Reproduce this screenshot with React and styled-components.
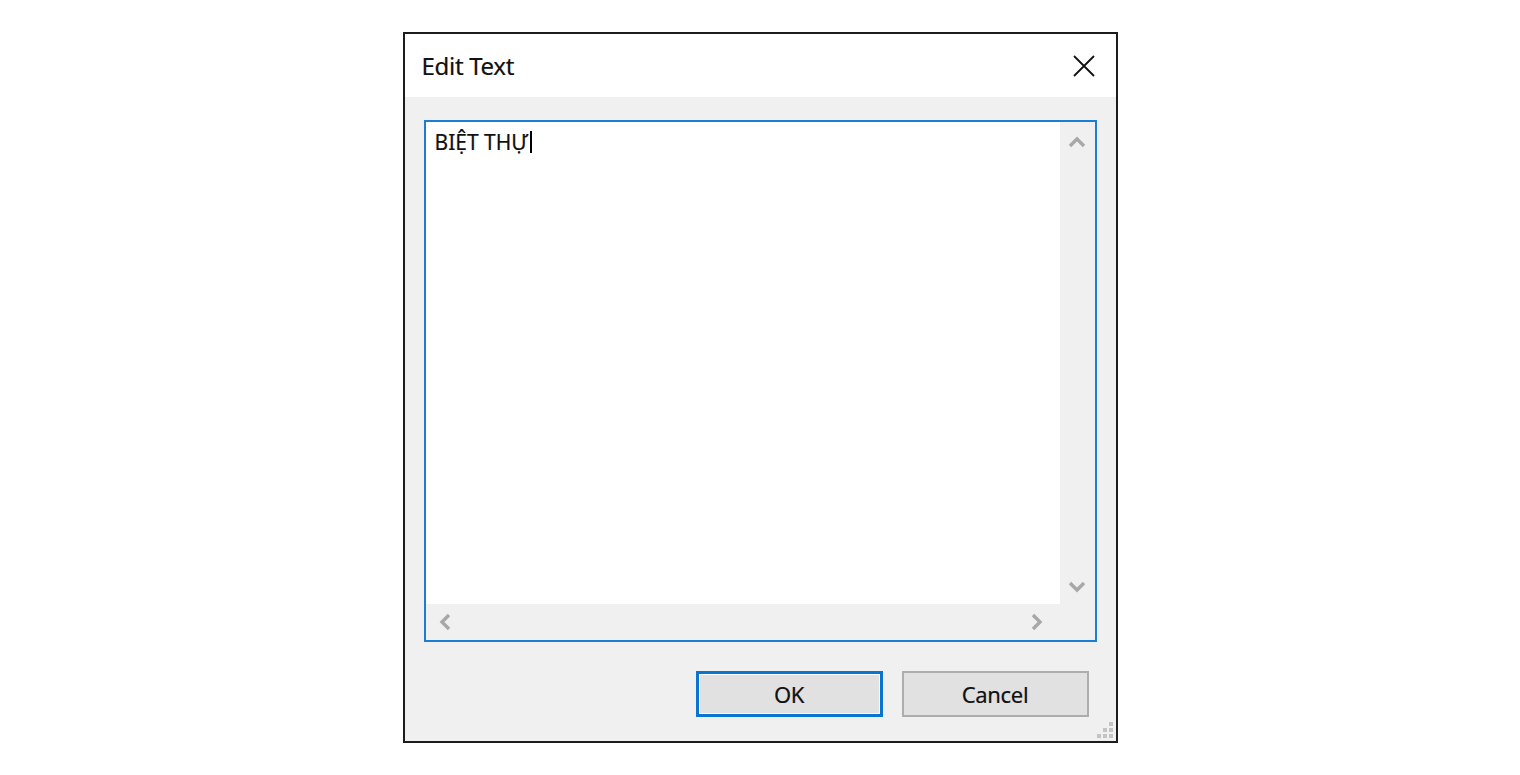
import styled, {createGlobalStyle} from "styled-components";

const GlobalStyle = createGlobalStyle`
    html, body {
        margin: 0;
        padding: 0;
        background: #ffffff;
    }
    body {
        font-family: "Noto Sans", "Open Sans", "Liberation Sans", sans-serif;
    }
`

const Page = styled.div`
    display: flex;
    justify-content: center;
    align-items: flex-start;
    padding-top: 32px;
    width: 1520px;
    height: 775px;
    box-sizing: border-box;
`

const Dialog = styled.div`
    position: relative;
    width: 715px;
    box-sizing: border-box;
    border: 2px solid #1c1c1c;
    background: #f0f0f0;
    display: flex;
    flex-direction: column;
`

const TitleBar = styled.div`
    height: 63px;
    background: #ffffff;
    display: flex;
    align-items: center;
    justify-content: space-between;
    padding: 0 20px 0 17px;
`

const Title = styled.span`
    font-size: 24px;
    color: #111111;
    letter-spacing: -0.3px;
    -webkit-text-stroke: 0.2px #111111;
`

const CloseButton = styled.div`
    width: 24px;
    height: 24px;
    display: flex;
    align-items: center;
    justify-content: center;
`

const Editor = styled.div`
    margin: 23px 19px 0;
    height: 522px;
    border: 2px solid #1a7fd4;
    box-sizing: border-box;
    display: grid;
    grid-template-columns: 1fr 35px;
    grid-template-rows: 1fr 36px;
    background: #f0f0f0;
`

const TextArea = styled.div`
    background: #ffffff;
    padding: 7px 0 0 9px;
    font-size: 21px;
    color: #111111;
    -webkit-text-stroke: 0.2px #111111;
    letter-spacing: 0;
    display: flex;
    align-items: flex-start;
    line-height: 26px;
`

const Caret = styled.span`
    display: inline-block;
    width: 2px;
    height: 22px;
    background: #000000;
    margin-left: 2px;
    margin-top: 2px;
`

const VScroll = styled.div`
    display: flex;
    flex-direction: column;
    justify-content: space-between;
    align-items: center;
    padding: 14px 0 11px;
`

const HScroll = styled.div`
    display: flex;
    justify-content: space-between;
    align-items: center;
    padding: 0 17px 0 13px;
`

const Corner = styled.div`
    background: #f0f0f0;
`

const ButtonRow = styled.div`
    display: flex;
    justify-content: flex-end;
    gap: 19px;
    margin-top: 29px;
    padding: 0 27px 24px 0;
`

const Button = styled.div`
    width: 187px;
    height: 46px;
    box-sizing: border-box;
    background: #e1e1e1;
    border: ${p => p.$primary ? "3px solid #0a74d1" : "2px solid #adadad"};
    box-shadow: ${p => p.$primary ? "inset 0 0 0 1px #ffffff" : "none"};
    display: flex;
    align-items: center;
    justify-content: center;
    font-size: 22px;
    color: #111111;
    -webkit-text-stroke: 0.2px #111111;
    letter-spacing: -0.3px;
`

const Grip = styled.svg`
    position: absolute;
    right: 3px;
    bottom: 3px;
`

// scrollbar arrow, thick grey chevron
const Chevron = ({dir}) => {
    const paths = {
        up: "M2 10 L9 3 L16 10",
        down: "M2 3 L9 10 L16 3",
        left: "M10 2 L3 9 L10 16",
        right: "M3 2 L10 9 L3 16",
    }
    const vertical = dir === "up" || dir === "down"
    return <svg width={vertical ? 18 : 13} height={vertical ? 13 : 18}
                viewBox={vertical ? "0 0 18 13" : "0 0 13 18"}>
        <path d={paths[dir]} fill="none" stroke="#a8a8a8" strokeWidth="3.4" />
    </svg>
}

export default function App() {
    return <>
        <GlobalStyle />
        <Page>
            <Dialog>
                <TitleBar>
                    <Title>Edit Text</Title>
                    <CloseButton>
                        <svg width="24" height="22" viewBox="0 0 24 22">
                            <path d="M2 1 L22 21 M22 1 L2 21" stroke="#111" strokeWidth="1.8" />
                        </svg>
                    </CloseButton>
                </TitleBar>
                <Editor>
                    <TextArea>BIỆT THỰ<Caret /></TextArea>
                    <VScroll>
                        <Chevron dir="up" />
                        <Chevron dir="down" />
                    </VScroll>
                    <HScroll>
                        <Chevron dir="left" />
                        <Chevron dir="right" />
                    </HScroll>
                    <Corner />
                </Editor>
                <ButtonRow>
                    <Button $primary>OK</Button>
                    <Button>Cancel</Button>
                </ButtonRow>
                <Grip width="16" height="16" viewBox="0 0 16 16">
                    {[[12, 0], [12, 6], [6, 6], [12, 12], [6, 12], [0, 12]].map(([x, y]) =>
                        <rect key={`${x}-${y}`} x={x} y={y} width="4" height="4" fill="#c4c4c4" />
                    )}
                </Grip>
            </Dialog>
        </Page>
    </>
}
